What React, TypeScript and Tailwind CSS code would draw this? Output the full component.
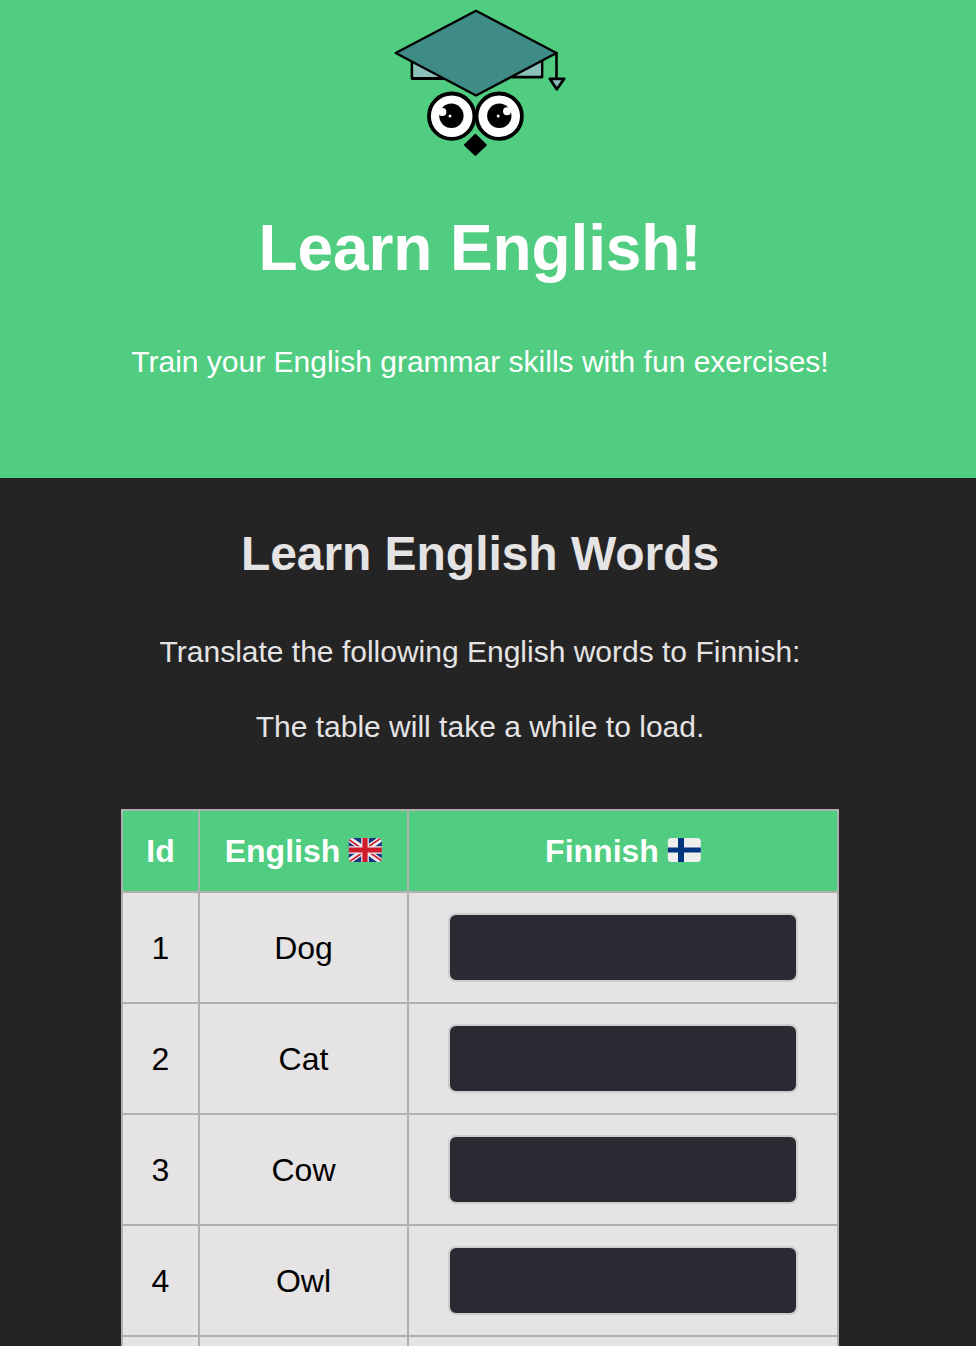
import React from "react";

const words = ["Dog", "Cat", "Cow", "Owl"];

function OwlLogo() {
  return (
    <svg
      className="block h-[165px] w-[190px]"
      viewBox="385 0 190 165"
      stroke="#000"
      strokeLinejoin="round"
      strokeLinecap="round"
      aria-hidden="true"
    >
      <path d="M412 61v17.5h31M542 59v18h-30" fill="none" strokeWidth="2.8" />
      <path d="M413.4 61v16h28l-20-16zM541 60v15.6h-27z" fill="#8bc0bb" stroke="none" />
      <path d="M476 10.7 556.5 53 476 95.5 395.7 53z" fill="#3f8b85" strokeWidth="2.4" />
      <path d="M556.5 53v25" fill="none" strokeWidth="2.6" />
      <path d="M549.8 78.8h14.4l-7.4 10.4z" fill="#8bc0bb" strokeWidth="2.8" />
      <circle cx="451.7" cy="116.2" r="22.7" fill="#fffefd" strokeWidth="3.8" />
      <circle cx="499.2" cy="116.2" r="22.7" fill="#fffefd" strokeWidth="3.8" />
      <g stroke="none">
        <circle cx="451.4" cy="115.8" r="12.2" fill="#000" />
        <circle cx="499.3" cy="115.8" r="12.2" fill="#000" />
        <circle cx="442.4" cy="112" r="4" fill="#fffefd" />
        <circle cx="507" cy="111.2" r="4" fill="#fffefd" />
        <circle cx="450" cy="115.9" r="1.5" fill="#fffefd" />
        <circle cx="498.2" cy="115.9" r="1.5" fill="#fffefd" />
      </g>
      <path d="M475.4 135.2 485.6 145 475.4 154.6 465.2 145z" fill="#000" strokeWidth="2.4" />
    </svg>
  );
}

function UkFlag() {
  return (
    <svg className="mb-[2px] h-6 w-[34px]" viewBox="0 0 34 24" aria-hidden="true">
      <clipPath id="uk-shape">
        <rect x="0.8" width="33" height="24" rx="3.5" />
      </clipPath>
      <g clipPath="url(#uk-shape)">
        <path d="M0 0h34v24H0z" fill="#17357f" />
        <path d="M0 0l34 24M34 0L0 24" stroke="#eee" strokeWidth="5.6" />
        <path d="M0 1l13 9M34 23l-13-9M33 0L20 9M1 24l13-9" stroke="#cf1b2b" strokeWidth="1.6" />
        <path d="M17 0v24M0 12h34" stroke="#eee" strokeWidth="7.6" />
        <path d="M17 0v24M0 12h34" stroke="#cf1b2b" strokeWidth="5.2" />
      </g>
    </svg>
  );
}

function FinnishFlag() {
  return (
    <svg className="mb-[2px] h-6 w-[34px]" viewBox="0 0 34 24" aria-hidden="true">
      <rect x="0.8" width="33" height="24" rx="3.5" fill="#eee" />
      <path d="M14 0v24" stroke="#003580" strokeWidth="6" />
      <path d="M0.8 12h33" stroke="#003580" strokeWidth="5" />
    </svg>
  );
}

export default function App() {
  return (
    <div className="h-[1346px] overflow-hidden bg-[#242424] font-['Liberation_Sans',Arial,sans-serif] text-[#e5e3e3]">
      <header className="flex h-[478px] flex-col items-center bg-[#51cd81] pr-4 text-white">
        <OwlLogo />
        <h1 className="mt-12 text-[64px] leading-[70px] font-bold tracking-[-0.1px]">Learn English!</h1>
        <p className="mt-14 text-[30px] leading-[45px]">
          Train your English grammar skills with fun exercises!
        </p>
      </header>
      <main className="flex flex-col items-center pr-4">
        <h2 className="mt-10 text-[48px] leading-[72px] font-bold tracking-[-0.05px]">Learn English Words</h2>
        <p className="mt-[39px] text-[30px] leading-[45px]">
          Translate the following English words to Finnish:
        </p>
        <p className="mt-[30px] text-[30px] leading-[45px]">The table will take a while to load.</p>
        <div className="mt-[60px] grid shrink-0 grid-cols-[75px_207px_428px] gap-[2px] bg-[#b0b0b0] p-[2px] text-[32px] text-black">
          <div className="flex h-20 items-center justify-center bg-[#51cd81] font-bold text-white">Id</div>
          <div className="flex h-20 items-center justify-center gap-2 bg-[#51cd81] font-bold text-white">
            English <UkFlag />
          </div>
          <div className="flex h-20 items-center justify-center gap-2 bg-[#51cd81] font-bold text-white">
            Finnish <FinnishFlag />
          </div>
          {words.map((word, i) => (
            <React.Fragment key={word}>
              <div className="flex h-[109px] items-center justify-center bg-[#e5e3e3]">{i + 1}</div>
              <div className="flex h-[109px] items-center justify-center bg-[#e5e3e3]">{word}</div>
              <div className="flex h-[109px] items-center justify-center bg-[#e5e3e3]">
                <input
                  aria-label={word}
                  className="h-[69px] w-[350px] rounded-lg border-2 border-[#cccccc] bg-[#2b2a33] px-4 text-white outline-none"
                />
              </div>
            </React.Fragment>
          ))}
          <div className="h-[109px] bg-[#e5e3e3]" />
          <div className="h-[109px] bg-[#e5e3e3]" />
          <div className="h-[109px] bg-[#e5e3e3]" />
        </div>
      </main>
    </div>
  );
}
